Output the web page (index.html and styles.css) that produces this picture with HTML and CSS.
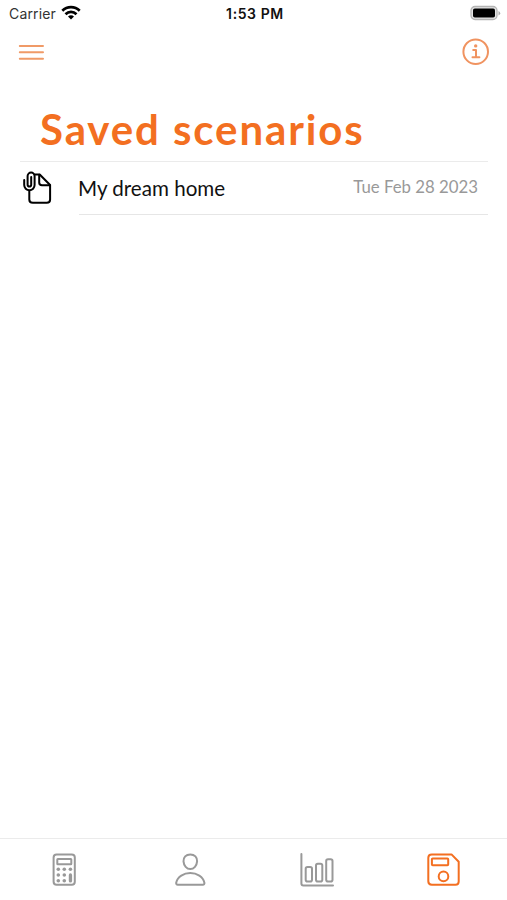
FILE: index.html
```html
<!DOCTYPE html>
<html lang="en">
<head>
  <meta charset="UTF-8">
  <meta name="viewport" content="width=device-width, initial-scale=1.0">
  <title>Saved scenarios</title>
  <link rel="stylesheet" href="styles.css">
</head>
<body>
  <div class="status-bar">
    <div class="carrier">
      <span>Carrier</span>
      <svg width="20" height="16" viewBox="0 0 20 16" fill="none" stroke="#000" stroke-width="2.7">
        <path d="M1.3 5.8C6.2 1 13.8 1 18.7 5.8"/>
        <path d="M4.5 9.2C7.6 6.2 12.4 6.2 15.5 9.2"/>
        <path d="M7 11.4C8.8 9.8 11.2 9.8 13 11.4L10 14.5Z" fill="#000" stroke="none"/>
      </svg>
    </div>
    <div class="time">1:53 PM</div>
    <svg class="battery" width="31" height="16" viewBox="0 0 31 16">
      <rect x="1" y="1.5" width="26" height="13" rx="4" fill="#e4e4e4" stroke="#b4b4b4" stroke-width="1.3"/>
      <rect x="3" y="3.5" width="22" height="9" rx="1.8" fill="#000"/>
      <path d="M28.5 6V10.4Q30.2 9.6 30.2 8.2T28.5 6Z" fill="#aaa"/>
    </svg>
  </div>

  <header class="toolbar">
    <svg width="26" height="28" viewBox="0 0 26 28" fill="none" stroke="#f09a67" stroke-width="2" stroke-linecap="round">
      <path d="M1.8 8H25M1.8 14.3H25M1.8 20.7H25"/>
    </svg>
    <svg width="28" height="28" viewBox="0 0 28 28" fill="none" stroke="#f09360" stroke-width="2" stroke-linecap="round" stroke-linejoin="round">
      <circle cx="13.7" cy="13.7" r="12.3"/>
      <path d="M11.2 12H14V19M10.5 19.2H17.4"/>
      <circle cx="13.7" cy="7.9" r="1.7" fill="#f09360" stroke="none"/>
    </svg>
  </header>

  <main>
    <h1>Saved scenarios</h1>
    <div class="list">
      <div class="item">
        <svg class="item-icon" width="30" height="34" viewBox="0 0 30 34" fill="none" stroke="#000" stroke-width="2" stroke-linecap="round" stroke-linejoin="round">
          <path d="M11.5 3.5H16.7L27.1 14V28.4Q27.1 31.8 23.8 31.8H9.8Q6.3 31.8 6.3 28.4V20"/>
          <path d="M16.2 3.7V11.4Q16.2 14.2 19 14.2H26.9"/>
          <path d="M1.2 9V14A5.2 5.2 0 0 0 11.6 14V5.1A3.5 3.5 0 0 0 4.6 5.1V13.8A1.8 1.8 0 0 0 8.2 13.8V6"/>
        </svg>
        <div class="item-body">
          <span class="name">My dream home</span>
          <span class="date">Tue Feb 28 2023</span>
        </div>
      </div>
    </div>
  </main>

  <nav class="tab-bar">
    <div class="tab">
      <svg width="34" height="34" viewBox="0 0 34 34" fill="none" stroke="currentColor" stroke-width="2" stroke-linejoin="round">
        <rect x="7.6" y="1.4" width="21.2" height="30.3" rx="3"/>
        <rect x="11.3" y="6" width="14" height="5.2" rx=".5"/>
        <g fill="currentColor" stroke="none">
          <circle cx="12.3" cy="16.3" r="1.8"/>
          <circle cx="18.3" cy="16.3" r="1.8"/>
          <circle cx="24.4" cy="16.3" r="1.8"/>
          <circle cx="12.3" cy="22" r="1.8"/>
          <circle cx="18.3" cy="22" r="1.8"/>
          <circle cx="12.3" cy="27.7" r="1.8"/>
          <circle cx="18.3" cy="27.7" r="1.8"/>
          <rect x="22.8" y="20.3" width="3.3" height="9.2" rx="1.6"/>
        </g>
      </svg>
    </div>
    <div class="tab">
      <svg width="34" height="34" viewBox="0 0 34 34" fill="none" stroke="currentColor" stroke-width="2" stroke-linejoin="round">
        <path d="M17.3 1.4C21.6 1.4 24.4 4.3 24.1 8.4C23.8 12.7 20.9 16.1 17.3 16.1S10.8 12.7 10.5 8.4C10.2 4.3 13 1.4 17.3 1.4Z"/>
        <path d="M17.3 20.1C10.8 20.1 4.5 23.5 3.2 29.7Q2.9 31.7 4.8 31.7H29.8Q31.7 31.7 31.4 29.7C30.1 23.5 23.8 20.1 17.3 20.1Z"/>
      </svg>
    </div>
    <div class="tab">
      <svg width="34" height="34" viewBox="0 0 34 34" fill="none" stroke="currentColor" stroke-width="2" stroke-linecap="round" stroke-linejoin="round">
        <path d="M1.4 1V30.5Q1.4 32.5 3.4 32.5H33"/>
        <rect x="5.7" y="14" width="6.3" height="14.5" rx="1.8"/>
        <rect x="16" y="10.7" width="6.3" height="17.8" rx="1.8"/>
        <rect x="26.2" y="6.2" width="6.3" height="22.3" rx="1.8"/>
      </svg>
    </div>
    <div class="tab active">
      <svg width="34" height="34" viewBox="0 0 34 34" fill="none" stroke="currentColor" stroke-width="2" stroke-linejoin="round">
        <path d="M4.8 1.4H24.5L31.7 8.7V28.5Q31.7 31.7 28.5 31.7H4.8Q1.3 31.7 1.3 28.3V4.8Q1.3 1.4 4.8 1.4Z"/>
        <rect x="4.9" y="5.5" width="16.3" height="6.7" rx=".8"/>
        <circle cx="16.5" cy="23.4" r="4.8"/>
      </svg>
    </div>
  </nav>
</body>
</html>
```

FILE: styles.css
```css
* {
  box-sizing: border-box;
}
body {
  margin: 0;
  height: 100vh;
  display: flex;
  flex-direction: column;
  background: #fff;
  font-family: Lato, sans-serif;
  overflow: hidden;
}
svg {
  display: block;
  flex-shrink: 0;
}
.status-bar {
  display: grid;
  grid-template-columns: 1fr auto 1fr;
  align-items: center;
  height: 28px;
  padding: 0 6px 2px 9px;
  font-family: Inter, sans-serif;
  font-size: 14px;
  color: #111;
}
.carrier {
  display: flex;
  align-items: center;
  gap: 5px;
  letter-spacing: 0.15px;
  color: #333;
}
.time {
  font-weight: 600;
  letter-spacing: 0.6px;
}
.battery {
  justify-self: end;
}
.toolbar {
  display: flex;
  justify-content: space-between;
  align-items: center;
  height: 48px;
  padding: 0 17px 0 18px;
}
main {
  flex: 1;
  padding: 24px 19px 0 20px;
}
h1 {
  margin: 0;
  padding-left: 20px;
  height: 61px;
  line-height: 58px;
  font-size: 42px;
  font-weight: 700;
  letter-spacing: 1.9px;
  color: #f36f21;
  white-space: nowrap;
}
.list {
  border-top: 1px solid #ebebeb;
}
.item {
  display: flex;
}
.item-icon {
  margin: 9px 0 0 3px;
}
.item-body {
  flex: 1;
  display: flex;
  justify-content: space-between;
  align-items: center;
  height: 53px;
  margin-left: 26px;
  padding-right: 10px;
  border-bottom: 1px solid #e6e6e6;
}
.name {
  margin-left: -1px;
  padding-bottom: 1px;
  font-size: 20.6px;
  color: #111;
}
.date {
  padding-bottom: 4px;
  font-size: 16.8px;
  color: #999;
}
.tab-bar {
  display: flex;
  height: 62px;
  border-top: 1px solid #ebebeb;
}
.tab {
  flex: 1;
  display: flex;
  justify-content: center;
  padding-top: 14px;
  color: #999;
}
.tab.active {
  color: #f36f21;
}
```
